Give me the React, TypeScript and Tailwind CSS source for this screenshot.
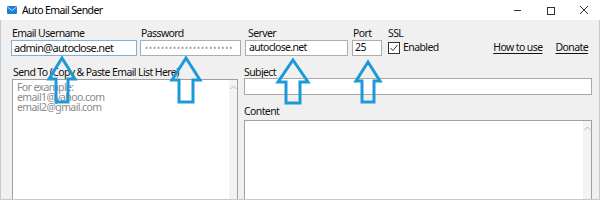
import React from "react";

const font = { fontFamily: '"Noto Sans", "Open Sans", sans-serif' };

function Arrow({ cx, top, bottom, head, shaft, base }: { cx: number; top: number; bottom: number; head: number; shaft: number; base: number }) {
  const w = head * 2 + 8;
  const h = bottom - top + 6;
  const c = w / 2;
  const t = 3;
  const b = bottom - top + 3;
  const hb = base - top + 3;
  const pts = `${c},${t} ${c + head},${hb} ${c + shaft},${hb} ${c + shaft},${b} ${c - shaft},${b} ${c - shaft},${hb} ${c - head},${hb}`;
  return (
    <svg
      className="pointer-events-none absolute"
      style={{ left: cx - c, top: top - 3 }}
      width={w}
      height={h}
    >
      <polygon points={pts} fill="none" stroke="#1c9ad8" strokeWidth={3} strokeLinejoin="miter" />
    </svg>
  );
}

function Scrollbar() {
  return (
    <div className="flex h-full w-[8px] flex-col items-center bg-[#f3f3f3] pt-[5px]">
      <svg width="7" height="5" viewBox="0 0 7 5">
        <path d="M0.5 4 L3.5 1 L6.5 4" fill="none" stroke="#b5b5b5" strokeWidth="1" />
      </svg>
    </div>
  );
}

export default function App() {
  return (
    <div className="relative h-[200px] w-[600px] overflow-hidden bg-[#f0f0f0] text-[10.5px] tracking-[-0.6px] text-[#111]" style={font}>
      {/* title bar */}
      <div className="flex h-[20px] items-center bg-white">
        <svg className="ml-[7px]" width="10" height="8" viewBox="0 0 10 8">
          <rect x="0" y="0" width="10" height="8" rx="1" fill="#1e7fd6" />
          <path d="M0.5 1 L5 4.5 L9.5 1" fill="none" stroke="#bfe0fb" strokeWidth="1" />
        </svg>
        <span className="ml-[5px] leading-none text-black">Auto Email Sender</span>
        <div className="ml-auto flex h-full items-center">
          <svg width="9" height="9" className="mr-[24px]" viewBox="0 0 9 9">
            <path d="M1 4.5 H8" stroke="#333" strokeWidth="1" />
          </svg>
          <svg width="9" height="9" className="mr-[24px]" viewBox="0 0 9 9">
            <rect x="1.5" y="1.5" width="7" height="7" fill="none" stroke="#333" strokeWidth="1" />
          </svg>
          <svg width="10" height="10" className="mr-[11px]" viewBox="0 0 10 10">
            <path d="M1 1 L9 9 M9 1 L1 9" stroke="#333" strokeWidth="1" />
          </svg>
        </div>
      </div>

      {/* body */}
      <div className="flex h-[180px] flex-col border-x border-b border-[#c8c8c8] pl-[10px] pr-[7px]">
        {/* top row */}
        <div className="mt-[7px] flex items-start">
          <div className="flex w-[126px] flex-col">
            <span className="h-[13px] pl-[1px] leading-[13px]">Email Username</span>
            <div className="flex h-[16px] items-center border border-[#7fb0de] bg-white pl-[2px] text-[11px] tracking-[-0.7px]">admin@autoclose.net</div>
          </div>
          <div className="ml-[3px] flex w-[101px] flex-col">
            <span className="h-[13px] pl-[1px] leading-[13px]">Password</span>
            <div className="flex h-[16px] items-center overflow-hidden border border-[#adadad] bg-white pl-[4px] text-[8px] tracking-[1px] text-[#9a9a9a]">
              ••••••••••••••••••••••
            </div>
          </div>
          <div className="ml-[4px] flex w-[103px] flex-col">
            <span className="h-[13px] pl-[3px] leading-[13px]">Server</span>
            <div className="flex h-[16px] items-center border border-[#adadad] bg-white pl-[3px] tracking-[-0.7px]">autoclose.net</div>
          </div>
          <div className="ml-[4px] flex w-[30px] flex-col">
            <span className="h-[13px] pl-[1px] leading-[13px]">Port</span>
            <div className="flex h-[16px] items-center border border-[#adadad] bg-white pl-[2px]">25</div>
          </div>
          <div className="ml-[6px] flex flex-col">
            <span className="h-[13px] leading-[13px]">SSL</span>
            <div className="flex h-[16px] items-center">
              <svg width="12" height="12" viewBox="0 0 12 12">
                <rect x="0.5" y="0.5" width="11" height="11" fill="#fff" stroke="#333" strokeWidth="1" />
                <path d="M2.5 6 L5 8.5 L9.5 3" fill="none" stroke="#333" strokeWidth="1" />
              </svg>
              <span className="ml-[3px]">Enabled</span>
            </div>
          </div>
          <div className="ml-auto mt-[13px] flex h-[16px] items-center">
            <span className="underline underline-offset-2">How to use</span>
            <span className="ml-[13px] mr-[4px] underline underline-offset-2">Donate</span>
          </div>
        </div>

        {/* bottom row */}
        <div className="mt-[10px] flex min-h-0 flex-1">
          <div className="flex w-[227px] flex-col pl-[1px]">
            <span className="h-[13px] pl-[1px] leading-[12px]">Send To (Copy &amp; Paste Email List Here)</span>
            <div className="flex flex-1 border border-b-0 border-[#a0a0a0] bg-white">
              <div className="flex-1 pl-[4px] pt-[2px] leading-[10px] text-[#8a8a8a]">
                <div>For example:</div>
                <div>email1@yahoo.com</div>
                <div>email2@gmail.com</div>
              </div>
              <Scrollbar />
            </div>
          </div>
          <div className="ml-[6px] flex flex-1 flex-col">
            <span className="h-[12px] leading-[12px]">Subject</span>
            <div className="h-[17px] border border-[#a8a8a8] bg-white" />
            <span className="mt-[10px] h-[12px] leading-[12px]">Content</span>
            <div className="mt-[3px] flex flex-1 border border-b-0 border-[#a0a0a0] bg-white">
              <div className="flex-1" />
              <Scrollbar />
            </div>
          </div>
        </div>
      </div>

      <Arrow cx={62} top={58} bottom={102} head={13} shaft={6} base={79} />
      <Arrow cx={186} top={58} bottom={102} head={14} shaft={7} base={80} />
      <Arrow cx={293} top={60} bottom={103} head={15} shaft={7} base={82} />
      <Arrow cx={368} top={62} bottom={102} head={12} shaft={6} base={81} />
    </div>
  );
}
